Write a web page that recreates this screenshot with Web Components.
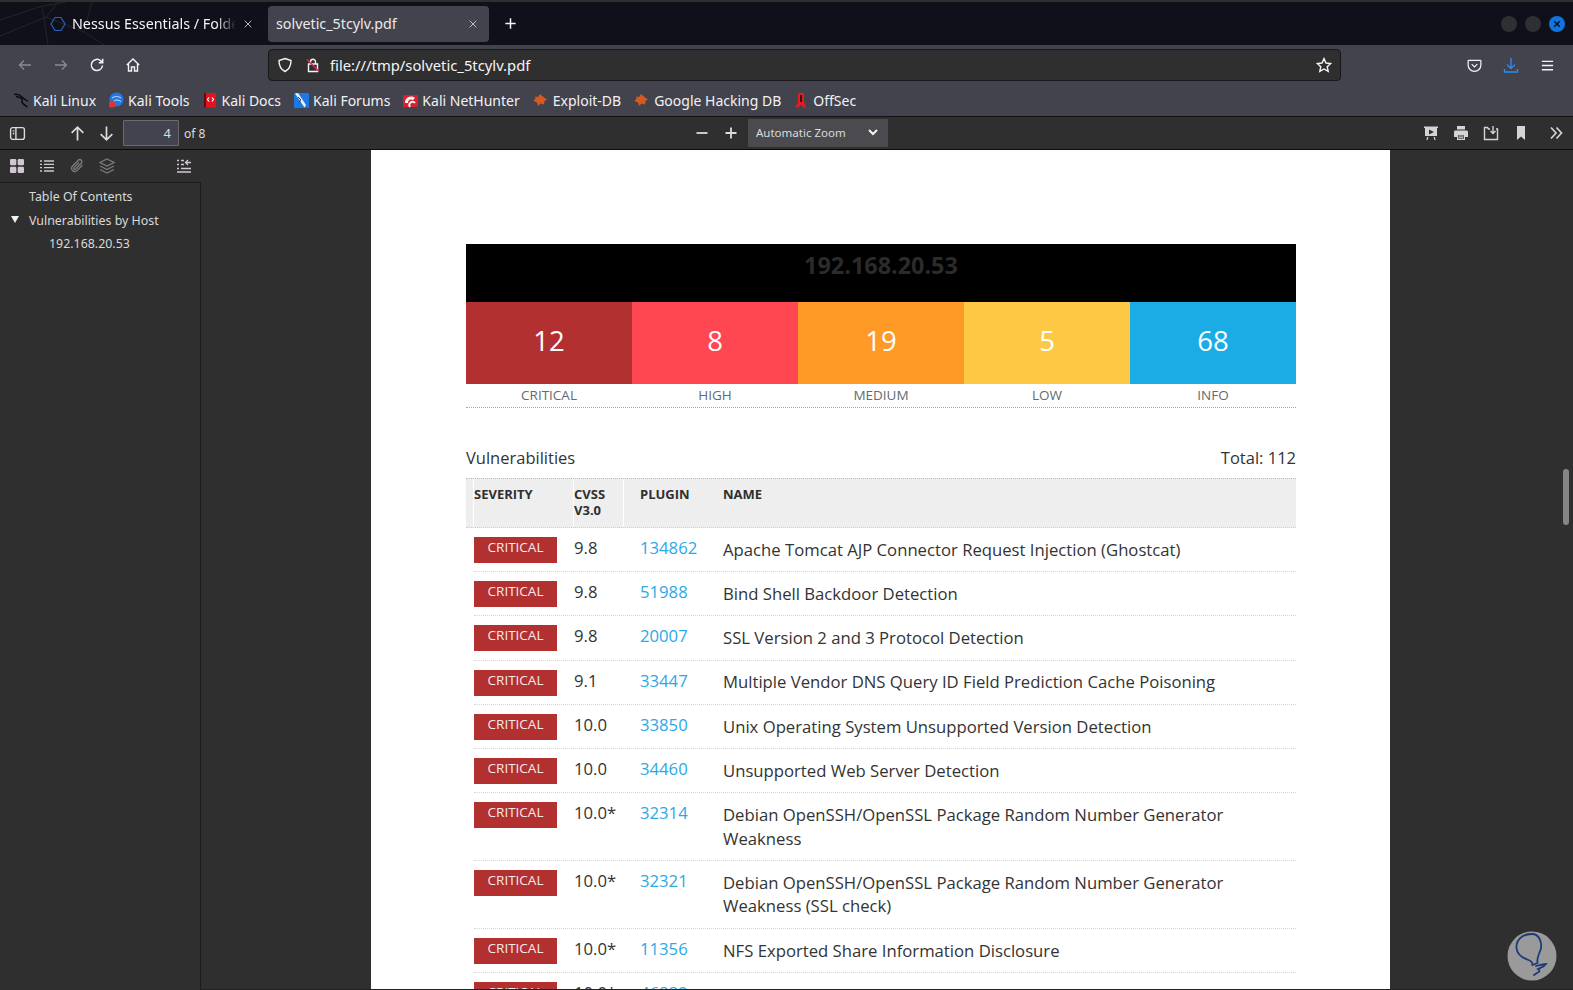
<!DOCTYPE html>
<html lang="en">
<head>
<meta charset="utf-8">
<title>solvetic_5tcylv.pdf</title>
<style>
  html, body { margin: 0; height: 100%; overflow: hidden; background: #2f2f2f; }
  body { font-family: "Noto Sans", sans-serif; }
</style>
</head>
<body>
<browser-window>
  <tab-strip>
    <browser-tab title-text="Nessus Essentials / Folders" favicon></browser-tab>
    <browser-tab title-text="solvetic_5tcylv.pdf" active></browser-tab>
  </tab-strip>
  <nav-bar url="file:///tmp/solvetic_5tcylv.pdf"></nav-bar>
  <bookmark-bar>
    <bookmark-item icon="kali">Kali Linux</bookmark-item>
    <bookmark-item icon="tools">Kali Tools</bookmark-item>
    <bookmark-item icon="docs">Kali Docs</bookmark-item>
    <bookmark-item icon="forums">Kali Forums</bookmark-item>
    <bookmark-item icon="nethunter">Kali NetHunter</bookmark-item>
    <bookmark-item icon="exploit">Exploit-DB</bookmark-item>
    <bookmark-item icon="exploit">Google Hacking DB</bookmark-item>
    <bookmark-item icon="offsec">OffSec</bookmark-item>
  </bookmark-bar>
  <pdf-toolbar></pdf-toolbar>
  <pdf-viewer>
    <report-page>
      <host-summary host="192.168.20.53"></host-summary>
      <vuln-table total="112">
        <vuln-row cvss="9.8" plugin="134862">Apache Tomcat AJP Connector Request Injection (Ghostcat)</vuln-row>
        <vuln-row cvss="9.8" plugin="51988">Bind Shell Backdoor Detection</vuln-row>
        <vuln-row cvss="9.8" plugin="20007">SSL Version 2 and 3 Protocol Detection</vuln-row>
        <vuln-row cvss="9.1" plugin="33447">Multiple Vendor DNS Query ID Field Prediction Cache Poisoning</vuln-row>
        <vuln-row cvss="10.0" plugin="33850">Unix Operating System Unsupported Version Detection</vuln-row>
        <vuln-row cvss="10.0" plugin="34460">Unsupported Web Server Detection</vuln-row>
        <vuln-row cvss="10.0*" plugin="32314">Debian OpenSSH/OpenSSL Package Random Number Generator Weakness</vuln-row>
        <vuln-row cvss="10.0*" plugin="32321">Debian OpenSSH/OpenSSL Package Random Number Generator Weakness (SSL check)</vuln-row>
        <vuln-row cvss="10.0*" plugin="11356">NFS Exported Share Information Disclosure</vuln-row>
        <vuln-row cvss="10.0*" plugin="46882">UnrealIRCd Backdoor Detection</vuln-row>
      </vuln-table>
    </report-page>
  </pdf-viewer>
</browser-window>

<script>
// stroke icons, all on a 16 box
const ICONS = {
  back: '<path d="M14 8H2.500M7 3.500 2.500 8 7 12.500"/>',
  forward: '<path d="M2 8h11.500M9 3.500 13.500 8 9 12.500"/>',
  reload: '<path d="M13.500 8.500A5.600 5.600 0 1 1 11.800 3.900L13.500 5.500M13.700 1.800v3.900H9.800"/>',
  home: '<path d="M1.800 8 8 2l6.200 6M3.500 7v7h3v-4h3v4h3V7"/>',
  shield: '<path d="M8 1.500 14 3.500c0 5-1.500 8.800-6 11-4.500-2.200-6-6-6-11z"/>',
  lock: '<path d="M5.500 7V4.800a2.500 2.500 0 0 1 5 0V7M3.500 7h9v7.500h-9z"/><path d="M2 2.500 14 14.500" stroke="#e22850"/>',
  star: '<path d="M8 1.600 10 6l4.700.5-3.500 3.200 1 4.700L8 12l-4.200 2.400 1-4.700L1.300 6.500 6 6z"/>',
  pocket: '<path d="M2 2.500h12c.5 0 .8.300.8.800v4.200a6.800 6.800 0 0 1-13.600 0V3.300c0-.5.300-.8.800-.8z"/><path d="M5 6.500 8 9.500l3-3"/>',
  download: '<path d="M8 1v10M4 7.500 8 11.500l4-4M1.500 12v3h13v-3"/>',
  menu: '<path d="M2 3.500h12M2 8h12M2 12.500h12"/>',
  plus: '<path d="M8 2.500v11M2.500 8h11"/>',
  close: '<path d="M3.500 3.500l9 9M12.500 3.500l-9 9"/>',
  sidebar: '<rect x="1.500" y="2.500" width="13" height="11" rx="2"/><path d="M6.500 2.500v11M3.500 5.500h1.500M3.500 8h1.500"/>',
  up: '<path d="M8 14.500V2M2.500 7.500 8 2l5.500 5.500"/>',
  down: '<path d="M8 1.500V14M2.500 8.500 8 14l5.500-5.500"/>',
  minus: '<path d="M2.500 8h11"/>',
  chevrons: '<path d="M3 2.500 8 8l-5 5.500M8.500 2.500l5 5.500-5 5.500"/>',
  list: '<path d="M1 3h2M5 3h10M1 6.300h2M5 6.300h10M1 9.700h2M5 9.700h10M1 13h2M5 13h10"/>',
  clip: '<path d="M13.500 7 7.800 12.800a3.200 3.200 0 0 1-4.500-4.500l6-6a2.100 2.100 0 0 1 3 3l-5.800 5.800a1 1 0 0 1-1.500-1.500L10 4.500"/>',
  layers: '<path d="M8 1 15 4.500 8 8 1 4.500zM1 8l7 3.500L15 8M1 11.500 8 15l7-3.500"/>',
  outline: '<path d="M1 2.500h2M5 2.500h3M1 6.500h2M5 6.500h3M1 10.500h2M5 10.500h10M1 14h14"/><path d="M15 4.500H9.500M12 2 9.500 4.500 12 7"/>'
};

// the filled pdf.js icons and the coloured favicons
const FILLED = {
  grid: '<rect x="1" y="1" width="6.300" height="6.300" rx="1.200"/><rect x="8.700" y="1" width="6.300" height="6.300" rx="1.200"/><rect x="1" y="8.700" width="6.300" height="6.300" rx="1.200"/><rect x="8.700" y="8.700" width="6.300" height="6.300" rx="1.200"/>',
  present: '<path d="M1 1.500h14v1.500h-1v8H2V3H1z"/><path d="M6 4.500 11 7l-5 2.500z" fill="#2f2f2f"/><path d="M4 12h1.300l-.6 3H3.500zM10.700 12H12l.5 3h-1.200z"/>',
  print: '<path d="M4 1h8v3.500H4zM2.500 5.500h11c1 0 1.500.7 1.500 1.500v5h-3v3H4v-3H1V7c0-.8.5-1.500 1.500-1.500z"/><path d="M5.300 10h5.400v3.800H5.300z" fill="#2f2f2f"/><path d="M6 11h4M6 12.700h4" stroke="currentColor" fill="none"/>',
  bookmark: '<path d="M4 1h8v14l-4-3.500L4 15z"/>',
  kali: '<path d="M1 2.500c3 -.5 6 .5 8 2.500 2 2 3.500 3.500 6 4M3 4.500c3 .5 5 1 6 2.500s-1 2 .5 4 3 2.500 5 4" fill="none" stroke="#0c0c10" stroke-width="1.500"/>',
  tools: '<circle cx="8.500" cy="7.500" r="7" fill="#2277e0"/><path d="M4 6c3-2 6-2 9 0M6 9c2-1.500 4-1.500 7 .5" fill="none" stroke="#cfe4ff" stroke-width="1"/><rect x="1" y="9.500" width="6" height="6" rx="1.500" fill="#e0352b"/>',
  docs: '<rect x="2" y="1" width="12" height="14.500" rx="1" fill="#e3141f"/><rect x="2" y="1" width="2" height="14.500" fill="#55101a"/><path d="M7 5.500 5.500 7.500 7 9.500M10 5.500l1.500 2-1.500 2" fill="none" stroke="#fff" stroke-width="1.200"/>',
  forums: '<rect x="1" y="1" width="15" height="15" rx="1" fill="#1c78e8"/><path d="M2 1.500 5 1l8 12-1.500 2.500z" fill="#f1f1f1"/><path d="M5 5l3 3M8 8.500l-2 1.500" stroke="#333" fill="none"/>',
  nethunter: '<rect x="1" y="3" width="15" height="12" rx="1" fill="#d92030"/><path d="M3 11C3 6 8 2.500 13 6l-2 2C8 6.500 6 8 6 11z" fill="#f3f3f3"/><path d="M8 15a3 3 0 0 1 5-4" fill="none" stroke="#f3f3f3" stroke-width="2"/>',
  exploit: '<path d="M8 2c1 2 3 1.500 4 3.500l3 2-2.500 1.500-.5 3.500-3.500-1-2.500 2.500-1-3.500L1.500 9l2-2.500L3 4.500l3 .5z" fill="#d85a1e"/>',
  offsec: '<path d="M5 1h6v9l2.500 5.500h-3L8 12.500l-2.500 3h-3L5 10z" fill="#e31b23"/><path d="M7.200 3h1.600v7H7.200z" fill="#111"/>',
  hexagon: '<path d="M5 1.500h6L15 8l-4 6.500H5L1 8z" fill="none" stroke="#2d5fb8" stroke-width="1.200"/>'
};

function icon(name, size = 16, width = 1.5) {
  if (FILLED[name]) {
    return `<svg width="${size}" height="${size}" viewBox="0 0 16 16" fill="currentColor">${FILLED[name]}</svg>`;
  }
  return `<svg width="${size}" height="${size}" viewBox="0 0 16 16" fill="none" stroke="currentColor" stroke-width="${width}">${ICONS[name]}</svg>`;
}

class BrowserWindow extends HTMLElement {
  connectedCallback() {
    this.attachShadow({ mode: "open" });
    this.shadowRoot.innerHTML = `
      <style>
        :host { display: flex; flex-direction: column; height: 990px; position: relative; overflow: hidden; }
      </style>
      <slot></slot>
    `;
  }
}

class TabStrip extends HTMLElement {
  connectedCallback() {
    this.attachShadow({ mode: "open" });
    this.shadowRoot.innerHTML = `
      <style>
        :host { display: flex; align-items: center; height: 43px; border-top: 2px solid #2f2f2f; background: #0f1019; padding-left: 43px; position: relative; flex: none; }
        .web { position: absolute; left: 0; top: 0; }
        .add { color: #f4f4f6; margin-left: 14px; display: flex; }
        .controls { margin-left: auto; margin-right: 8px; display: flex; gap: 8px; }
        .dot { width: 16px; height: 16px; border-radius: 50%; background: #2f3034; }
        .dot.blue { background: #1273de; color: #06142c; display: flex; align-items: center; justify-content: center; }
      </style>
      <svg class="web" width="210" height="43" fill="none" stroke="#24252c" stroke-width="1">
        <path d="M0 18 42 4 66 0M42 4 48 43M0 34 46 15 84 30 104 43M46 15 58 0M84 30 92 0"/>
      </svg>
      <slot></slot>
      <span class="add">${icon("plus", 15, 1.6)}</span>
      <span class="controls">
        <span class="dot"></span><span class="dot"></span>
        <span class="dot blue">${icon("close", 10, 2.4)}</span>
      </span>
    `;
  }
}

class BrowserTab extends HTMLElement {
  connectedCallback() {
    this.attachShadow({ mode: "open" });
    const fav = this.hasAttribute("favicon") ? icon("hexagon") : "";
    this.shadowRoot.innerHTML = `
      <style>
        :host { display: flex; align-items: center; width: 221px; height: 36px; box-sizing: border-box; padding: 0 10px 0 7px; border-radius: 4px; gap: 6px; color: #f4f4f6; font: 14.300px "Noto Sans", sans-serif; position: relative; z-index: 1; }
        :host([active]) { background: #42434c; margin-left: 4px; padding-left: 8px; color: #e9e9ee; }
        .label { flex: 1; min-width: 0; white-space: nowrap; overflow: hidden; -webkit-mask-image: linear-gradient(to right, #000 88%, transparent); mask-image: linear-gradient(to right, #000 88%, transparent); }
        :host([active]) .label { -webkit-mask-image: none; mask-image: none; }
        .x { display: flex; color: #d8d8dc; }
        svg { flex: none; }
      </style>
      ${fav}
      <span class="label">${this.getAttribute("title-text")}</span>
      <span class="x">${icon("close", 12, 1.1)}</span>
    `;
  }
}

class NavBar extends HTMLElement {
  connectedCallback() {
    this.attachShadow({ mode: "open" });
    this.shadowRoot.innerHTML = `
      <style>
        :host { display: flex; align-items: center; height: 40px; background: #42434c; color: #f4f4f6; flex: none; padding-left: 17px; }
        .btn { width: 36px; flex: none; display: flex; justify-content: flex-start; }
        .dim { color: #8a8b92; }
        .url { display: flex; align-items: center; width: 1073px; height: 32px; margin-left: 108px; box-sizing: border-box; border: 1px solid #17171c; border-radius: 4px; background: #2f2f2f; padding: 0 8px; font: 14.800px "Noto Sans", sans-serif; flex: none; }
        .url svg { flex: none; }
        .url .t { margin-left: 9px; flex: 1; }
        .url .lock { margin-left: 12px; display: flex; }
        .right { display: flex; margin-left: 126px; gap: 21px; align-items: center; }
        .blue { color: #2a8cf0; display: flex; }
      </style>
      <span class="btn dim">${icon("back", 16, 1.3)}</span>
      <span class="btn dim">${icon("forward", 16, 1.3)}</span>
      <span class="btn">${icon("reload", 16, 1.5)}</span>
      <span class="btn" style="width:35px">${icon("home", 16, 1.4)}</span>
      <div class="url">
        ${icon("shield", 16, 1.4)}
        <span class="lock">${icon("lock", 16, 1.4)}</span>
        <span class="t">${this.getAttribute("url")}</span>
        ${icon("star", 16, 1.4)}
      </div>
      <div class="right">
        ${icon("pocket", 15, 1.3)}
        <span class="blue">${icon("download", 16, 1.4)}</span>
        ${icon("menu", 15, 1.4)}
      </div>
    `;
  }
}

class BookmarkBar extends HTMLElement {
  connectedCallback() {
    this.attachShadow({ mode: "open" });
    this.shadowRoot.innerHTML = `
      <style>
        :host { display: flex; align-items: center; gap: 12px; height: 30px; background: #42434c; padding: 0 0 1px 13px; border-bottom: 1px solid #111116; flex: none; }
      </style>
      <slot></slot>
    `;
  }
}

class BookmarkItem extends HTMLElement {
  connectedCallback() {
    this.attachShadow({ mode: "open" });
    this.shadowRoot.innerHTML = `
      <style>
        :host { display: inline-flex; align-items: center; gap: 4px; color: #f2f2f5; font: 14px "Noto Sans", sans-serif; white-space: nowrap; }
        :host([icon="exploit"]) { gap: 5px; }
        svg { display: block; }
      </style>
      ${icon(this.getAttribute("icon"))}
      <slot></slot>
    `;
  }
}

class PdfToolbar extends HTMLElement {
  connectedCallback() {
    this.attachShadow({ mode: "open" });
    this.shadowRoot.innerHTML = `
      <style>
        :host { display: flex; align-items: center; height: 32px; background: #2f2f2f; border-bottom: 1px solid #0c0c0c; color: #dcdcdc; font: 12px "Noto Sans", sans-serif; flex: none; padding-left: 9px; position: relative; }
        .page { width: 56px; height: 26px; box-sizing: border-box; margin-left: 8px; border: 1px solid #6a6a70; background: #42434e; text-align: right; padding: 3px 7px 0 0; font-size: 13px; border-radius: 1px; }
        .of { margin-left: 5px; }
        .arrows { display: flex; gap: 12px; margin-left: 43px; }
        .zoom { position: absolute; left: 694px; top: 2px; height: 28px; display: flex; align-items: center; gap: 13px; }
        .select { display: flex; align-items: center; justify-content: space-between; width: 140px; height: 28px; margin-left: -4px; box-sizing: border-box; padding: 0 10px 2px 8px; background: #4a4a4f; font-size: 11.500px; }
        .tools { margin-left: auto; display: flex; gap: 14px; align-items: center; padding-right: 9px; color: #d4d4d4; }
        .more { margin-left: 5px; display: flex; }
      </style>
      ${icon("sidebar", 17, 1.3)}
      <span class="arrows">${icon("up", 17, 1.6)}${icon("down", 17, 1.6)}</span>
      <span class="page">4</span>
      <span class="of">of 8</span>
      <span class="zoom">
        ${icon("minus", 16, 1.8)}
        ${icon("plus", 16, 1.8)}
        <span class="select">Automatic Zoom
          <svg width="10" height="8" viewBox="0 0 10 8" fill="none" stroke="#f4f4f4" stroke-width="2"><path d="M1 2l4 4 4-4"/></svg>
        </span>
      </span>
      <span class="tools">
        ${icon("present")}${icon("print")}
        <svg width="16" height="16" viewBox="0 0 16 16" fill="none" stroke="currentColor" stroke-width="1.400"><path d="M7 4H5.500l-1-1.500h-3v12h13V4H13M10 1v7.500M7.500 6 10 8.500 12.500 6"/></svg>
        ${icon("bookmark")}
        <span class="more">${icon("chevrons", 16, 1.7)}</span>
      </span>
    `;
  }
}

class PdfViewer extends HTMLElement {
  connectedCallback() {
    this.attachShadow({ mode: "open" });
    this.shadowRoot.innerHTML = `
      <style>
        :host { display: flex; flex: 1; min-height: 0; background: #2f2f2f; position: relative; }
        .main { flex: 1; min-width: 0; overflow: hidden; padding-left: 170px; border-bottom: 1px solid #222; }
        /* overlay scrollbar and watermark sit over the viewer */
        .thumb { position: absolute; left: 1563px; top: 319px; width: 6px; height: 56px; border-radius: 3px; background: #858585; }
        .mark { position: absolute; left: 1507px; top: 781px; }
      </style>
      <pdf-sidebar></pdf-sidebar>
      <div class="main"><slot></slot></div>
      <div class="thumb"></div>
      <svg class="mark" width="50" height="50" viewBox="0 0 50 50">
        <circle cx="25" cy="25" r="24.500" fill="#9a9a9a"/>
        <path d="M25 3C14 3 9 10 9.500 17c.5 6 6 10 12 12 3 1 4 3 4 5l5-2c-1-4 1-8 3-13 2-7-1-16-8.500-16zM29 35c4-1 8-2 10-2-2 3-4 3-8 5 2 1 2 3-1 4l-3 2" fill="none" stroke="#1d3a78" stroke-width="1.800" stroke-linecap="round"/>
      </svg>
    `;
  }
}

class PdfSidebar extends HTMLElement {
  connectedCallback() {
    this.attachShadow({ mode: "open" });
    this.shadowRoot.innerHTML = `
      <style>
        :host { display: flex; flex-direction: column; width: 201px; flex: none; color: #d9d9d9; font: 12.400px "Noto Sans", sans-serif; }
        .bar { display: flex; align-items: center; gap: 14px; height: 32px; padding-left: 9px; border-bottom: 1px solid #1d1d1d; color: #cfc8d0; }
        .bar .dim { color: #7d7d7d; display: flex; }
        .bar .last { margin-left: 47px; display: flex; }
        .tree { flex: 1; border-right: 1px solid #1d1d1d; padding-top: 2px; }
        .node { height: 23.500px; display: flex; align-items: center; padding-left: 29px; position: relative; }
        .sub { padding-left: 49px; }
        .tri { position: absolute; left: 11px; top: 7px; width: 0; height: 0; border: 4.500px solid transparent; border-top: 7px solid #f2f2f2; border-bottom: 0; }
      </style>
      <div class="bar">
        ${icon("grid")}${icon("list", 16, 1.3)}
        <span class="dim">${icon("clip", 16, 1.3)}</span>
        <span class="dim">${icon("layers", 16, 1.2)}</span>
        <span class="last">${icon("outline", 16, 1.3)}</span>
      </div>
      <div class="tree">
        <div class="node">Table Of Contents</div>
        <div class="node"><span class="tri"></span>Vulnerabilities by Host</div>
        <div class="node sub">192.168.20.53</div>
      </div>
    `;
  }
}

class ReportPage extends HTMLElement {
  connectedCallback() {
    this.attachShadow({ mode: "open" });
    this.shadowRoot.innerHTML = `
      <style>
        :host { display: block; width: 1019px; box-sizing: border-box; height: 1400px; padding: 94px 94px 0 95px; background: #fff; font-family: "Open Sans", sans-serif; color: #333; }
      </style>
      <slot></slot>
    `;
  }
}

class HostSummary extends HTMLElement {
  connectedCallback() {
    this.attachShadow({ mode: "open" });
    const levels = [
      ["12", "CRITICAL", "#b33030"],
      ["8", "HIGH", "#fe4750"],
      ["19", "MEDIUM", "#fe9a25"],
      ["5", "LOW", "#fdc944"],
      ["68", "INFO", "#1cace5"]
    ];
    this.shadowRoot.innerHTML = `
      <style>
        :host { display: block; border-bottom: 1px dotted #a8a8a8; }
        .host { height: 58px; background: #000; color: #2b2b2b; font-size: 23.400px; font-weight: 700; text-align: center; line-height: 42px; }
        .levels { display: grid; grid-template-columns: repeat(5, 1fr); }
        .count { height: 82px; color: #fff; font-size: 27.500px; display: flex; align-items: center; justify-content: center; padding-bottom: 5px; box-sizing: border-box; }
        .label { height: 23px; text-align: center; font-size: 13.500px; line-height: 22px; color: #5f6b70; }
      </style>
      <div class="host">${this.getAttribute("host")}</div>
      <div class="levels">
        ${levels.map(([n, label, colour]) => `<div><div class="count" style="background:${colour}">${n}</div><div class="label">${label}</div></div>`).join("")}
      </div>
    `;
  }
}

class VulnTable extends HTMLElement {
  connectedCallback() {
    this.attachShadow({ mode: "open" });
    this.shadowRoot.innerHTML = `
      <style>
        :host { display: block; margin-top: 36px; }
        .title { display: flex; justify-content: space-between; font-size: 16.500px; line-height: 28px; height: 34px; color: #333; }
        .head { display: grid; grid-template-columns: 7px 100px 50px 1fr; height: 50px; box-sizing: border-box; background: #eee; border-top: 1px dotted #bdbdbd; border-bottom: 1px dotted #cfcfcf; font-size: 13px; font-weight: 700; line-height: 16px; color: #2f2f2f; }
        .head > div { border-left: 1px solid #fff; padding: 7px 0 0 0; }
        .head > div:first-child { border-left: 0; }
        .head .plugin { display: flex; gap: 0; padding-left: 16px; }
        .head .plugin span { width: 83px; }
      </style>
      <div class="title"><span>Vulnerabilities</span><span>Total: ${this.getAttribute("total")}</span></div>
      <div class="head">
        <div></div><div>SEVERITY</div><div>CVSS<br>V3.0</div>
        <div class="plugin"><span>PLUGIN</span><span>NAME</span></div>
      </div>
      <slot></slot>
    `;
  }
}

class VulnRow extends HTMLElement {
  connectedCallback() {
    this.attachShadow({ mode: "open" });
    this.shadowRoot.innerHTML = `
      <style>
        :host { display: grid; grid-template-columns: 100px 66px 83px 1fr; margin-left: 8px; padding: 9px 0 8px; border-bottom: 1px dotted #d4d4d4; font-size: 16.700px; color: #333; }
        .badge { width: 83px; height: 26px; background: #b33030; color: #f6eaea; font-size: 13.500px; text-align: center; line-height: 21px; }
        .cvss, .plugin { line-height: 21px; }
        .plugin { color: #2ba9e6; }
        .name { padding: 0.650px 65px 2px 0; line-height: 23.600px; }
      </style>
      <div><div class="badge">CRITICAL</div></div>
      <div class="cvss">${this.getAttribute("cvss")}</div>
      <div class="plugin">${this.getAttribute("plugin")}</div>
      <div class="name"><slot></slot></div>
    `;
  }
}

customElements.define("browser-window", BrowserWindow);
customElements.define("tab-strip", TabStrip);
customElements.define("browser-tab", BrowserTab);
customElements.define("nav-bar", NavBar);
customElements.define("bookmark-bar", BookmarkBar);
customElements.define("bookmark-item", BookmarkItem);
customElements.define("pdf-toolbar", PdfToolbar);
customElements.define("pdf-viewer", PdfViewer);
customElements.define("pdf-sidebar", PdfSidebar);
customElements.define("report-page", ReportPage);
customElements.define("host-summary", HostSummary);
customElements.define("vuln-table", VulnTable);
customElements.define("vuln-row", VulnRow);
</script>
</body>
</html>
